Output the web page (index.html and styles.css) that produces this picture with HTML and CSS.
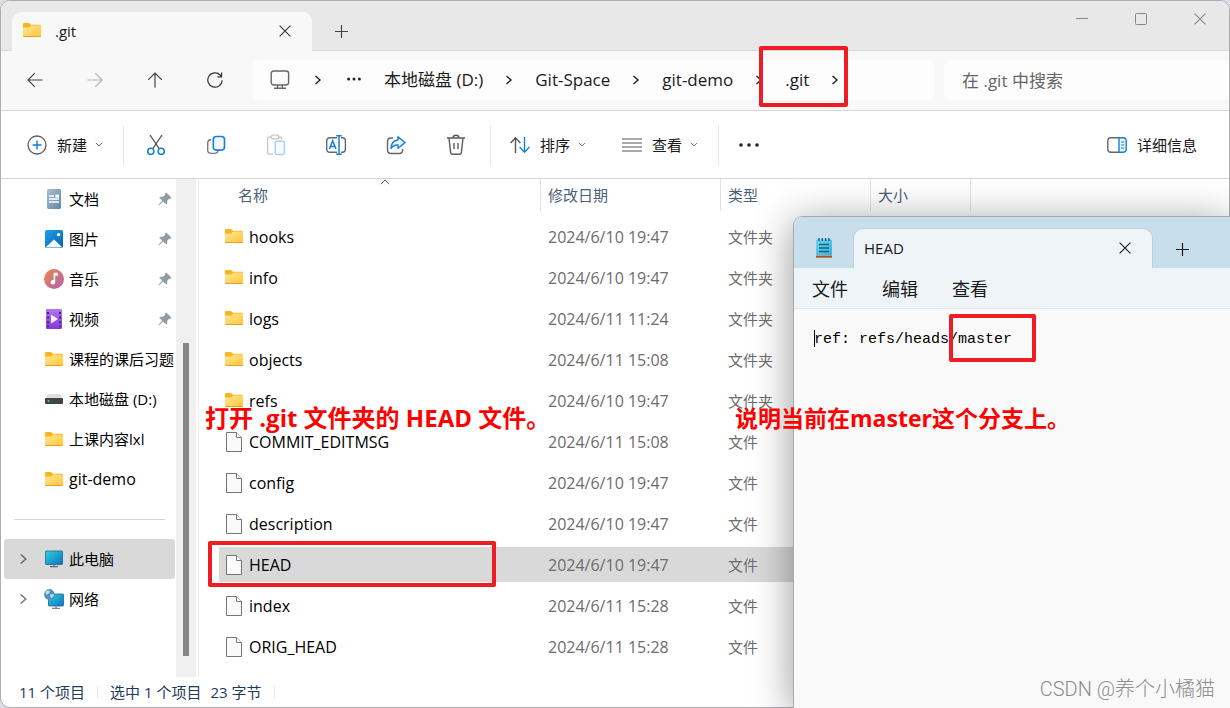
FILE: index.html
```html
<!DOCTYPE html>
<html lang="zh-CN">
<head>
<meta charset="utf-8">
<title>.git</title>
<link rel="stylesheet" href="styles.css">
</head>
<body>
<svg class="defs" width="0" height="0" aria-hidden="true">
  <defs>
    <linearGradient id="gFolder" x1="0" y1="0" x2="1" y2="1"><stop offset="0" stop-color="#ffe79a"/><stop offset="1" stop-color="#ffc83a"/></linearGradient>
    <linearGradient id="gDoc" x1="0" y1="0" x2="1" y2="1"><stop offset="0" stop-color="#a9bfd6"/><stop offset="1" stop-color="#6484a6"/></linearGradient>
    <linearGradient id="gPic" x1="0" y1="0" x2="1" y2="1"><stop offset="0" stop-color="#1fa0e6"/><stop offset="1" stop-color="#0763b4"/></linearGradient>
    <linearGradient id="gMusic" x1="0" y1="0" x2="1" y2="1"><stop offset="0" stop-color="#f0884f"/><stop offset="1" stop-color="#b05fae"/></linearGradient>
    <linearGradient id="gVideo" x1="0" y1="0" x2="0" y2="1"><stop offset="0" stop-color="#b573f2"/><stop offset="1" stop-color="#8238dc"/></linearGradient>
    <linearGradient id="gScreen" x1="0" y1="0" x2="1" y2="1"><stop offset="0" stop-color="#2fd3dc"/><stop offset="1" stop-color="#0b72c4"/></linearGradient>
    <linearGradient id="gNote" x1="0" y1="0" x2="1" y2="1"><stop offset="0" stop-color="#6fd3f3"/><stop offset="1" stop-color="#3fb0d6"/></linearGradient>
    <symbol id="folder" viewBox="0 0 18 15"><path d="M0 1.2Q0 0 1 0H6L8 1.8H17Q18 1.8 18 3V7H0Z" fill="#f9b51c"/><path d="M0 4.6H6.4L8.2 2.4H18V13H0Z" fill="url(#gFolder)"/><path d="M0 13H18V13.3Q18 14 17.2 14H.8Q0 14 0 13.3Z" fill="#e59f1c"/></symbol>
    <symbol id="file" viewBox="0 0 18 20"><path d="M1.5.5H11.5L16.5 5.5V19.5H1.5Z" fill="#fafafa" stroke="#757575"/><path d="M11.5.5V5.5H16.5" fill="#fff" stroke="#757575"/></symbol>
    <symbol id="pin" viewBox="0 0 14 14"><path d="M8.2.5 13.5 5.6 12.4 6.7 11.5 6.5 9.2 8.8 9.3 11.6 8.2 12.5 5.1 9.6 1.2 13.3.4 13.4.6 12.6 4.2 8.7 1.2 5.6 2.2 4.7 5.1 4.8 7.4 2.5 7.1 1.6Z" fill="#929da5"/></symbol>
    <symbol id="chev" viewBox="0 0 8 10"><path d="M1.5 1 6 5 1.5 9" fill="none" stroke="#222" stroke-width="1.4"/></symbol>
    <symbol id="down" viewBox="0 0 8 5"><path d="M.8.8 4 4 7.2.8" fill="none" stroke="#777"/></symbol>
    <symbol id="cross" viewBox="0 0 12 12"><path d="M.6.6 11.4 11.4M11.4.6.6 11.4" fill="none" stroke="currentColor" stroke-width="1.1"/></symbol>
    <symbol id="plus" viewBox="0 0 13 13"><path d="M6.5 0V13M0 6.5H13" fill="none" stroke="currentColor" stroke-width="1.2"/></symbol>
  </defs>
</svg>

<main class="explorer">
  <header class="titlebar">
    <div class="tab">
      <svg class="ic-folder"><use href="#folder"/></svg>
      <span class="tab-title">.git</span>
      <button class="plain" aria-label="关闭标签页"><svg class="ic-12"><use href="#cross"/></svg></button>
    </div>
    <button class="plain new-tab" aria-label="新标签页"><svg class="ic-13"><use href="#plus"/></svg></button>
    <div class="caption">
      <button class="plain" aria-label="最小化"><svg width="12" height="12"><path d="M0 5.500H12" stroke="#888"/></svg></button>
      <button class="plain" aria-label="最大化"><svg width="12" height="12"><rect x=".5" y=".5" width="11" height="11" rx="1" fill="none" stroke="#888"/></svg></button>
      <button class="plain" aria-label="关闭"><svg class="ic-12"><use href="#cross"/></svg></button>
    </div>
  </header>

  <nav class="navbar">
    <div class="nav-buttons">
      <button class="plain" aria-label="后退"><svg width="16" height="16" fill="none" stroke="#444" stroke-width="1.2"><path d="M15.5 8H1M7.8 1.2 1 8 7.8 14.8"/></svg></button>
      <button class="plain" aria-label="前进"><svg width="16" height="16" fill="none" stroke="#b5b5b5" stroke-width="1.2"><path d="M.5 8H15M8.2 1.2 15 8 8.2 14.8"/></svg></button>
      <button class="plain" aria-label="向上"><svg width="16" height="16" fill="none" stroke="#444" stroke-width="1.2"><path d="M8 15.5V1M1.2 7.8 8 1 14.8 7.8"/></svg></button>
      <button class="plain" aria-label="刷新"><svg width="16" height="16" fill="none" stroke="#333" stroke-width="1.2"><path d="M15.2 8.4A7.2 7.2 0 1 1 13.2 3L14.600 4.600M14.600.6V4.800H10.400"/></svg></button>
    </div>
    <div class="address">
      <svg class="pc" width="20" height="20" fill="none" stroke="#666" stroke-width="1.4"><rect x="1.2" y="1" width="17.4" height="14" rx="2.4"/><path d="M7.5 15V18M12.3 15V18M4 18.2H16"/></svg>
      <svg class="ic-chev lead"><use href="#chev"/></svg>
      <svg width="16" height="10" fill="#222"><circle cx="2.6" cy="4" r="1.5"/><circle cx="8" cy="4" r="1.5"/><circle cx="13.4" cy="4" r="1.5"/></svg>
      <a href="#">本地磁盘 (D:)</a>
      <svg class="ic-chev"><use href="#chev"/></svg>
      <a href="#">Git-Space</a>
      <svg class="ic-chev"><use href="#chev"/></svg>
      <a href="#">git-demo</a>
      <svg class="ic-chev"><use href="#chev"/></svg>
      <a href="#">.git</a>
      <svg class="ic-chev"><use href="#chev"/></svg>
    </div>
    <input class="search" type="search" placeholder="在 .git 中搜索" aria-label="在 .git 中搜索">
  </nav>

  <div class="toolbar">
    <button class="tool labelled first"><svg width="20" height="20" fill="none"><circle cx="10" cy="10" r="9" stroke="#5c5c5c" stroke-width="1.3"/><path d="M10 5.6V14.4M5.6 10H14.4" stroke="#0f7bd4" stroke-width="1.4"/></svg><span>新建</span><svg class="ic-down"><use href="#down"/></svg></button>
    <i class="sep"></i>
    <div class="tool-icons">
      <button class="tool" aria-label="剪切"><svg width="20" height="22" fill="none" stroke-width="1.3"><path d="M4 1 13.2 14.6M16 1 6.8 14.6" stroke="#555"/><circle cx="4.8" cy="17.3" r="3.1" stroke="#1480d8" stroke-width="1.5"/><circle cx="15.2" cy="17.3" r="3.1" stroke="#1480d8" stroke-width="1.5"/></svg></button>
      <button class="tool" aria-label="复制"><svg width="20" height="20" fill="none" stroke-width="1.4"><path d="M5.3 4.8Q1.7 4.8 1.7 8.2V15Q1.7 18.4 5.1 18.4H8.5Q11.5 18.4 12 16.2" stroke="#777"/><rect x="7.3" y="1.5" width="11.2" height="13.6" rx="3" stroke="#1480d8" stroke-width="1.6" fill="#f1f7fd"/></svg></button>
      <button class="tool" aria-label="粘贴"><svg width="20" height="22" fill="none" stroke-width="1.3"><path d="M6 3.2H3Q1.6 3.2 1.6 4.6V18.8Q1.6 20.2 3 20.2H7M12 3.2H14.5Q15.8 3.2 15.8 4.6V5.5" stroke="#c6c6c6"/><rect x="5" y="1.2" width="8" height="3.6" rx="1.8" stroke="#c6c6c6"/><rect x="9.2" y="7.3" width="9.2" height="13.2" rx="1.4" stroke="#a5d1f3" stroke-width="1.5" fill="#f5faff"/></svg></button>
      <button class="tool" aria-label="重命名"><svg width="22" height="20" fill="none" stroke-width="1.4"><path d="M12 2.7H5Q1.7 2.7 1.7 6V14Q1.7 17.3 5 17.3H12M16 2.7H17.4Q20.4 2.7 20.4 6V14Q20.4 17.3 17.4 17.3H16" stroke="#666"/><path d="M4.4 14 7.7 5.8 11 14M5.6 11.4H9.9M14 1V19M11.2.8H16.8M11.2 19.2H16.8" stroke="#1480d8" stroke-width="1.5"/></svg></button>
      <button class="tool" aria-label="共享"><svg width="20" height="20" fill="none" stroke-width="1.4" stroke-linejoin="round"><path d="M7 3H5Q1.5 3 1.5 6.4V15Q1.5 18.5 5 18.5H13.2Q16.6 18.5 16.6 15V14" stroke="#666"/><path d="M12 1.7 19 7.6 12 13.2V10Q7.6 9.6 5 13.5 5.4 5.6 12 5Z" stroke="#1480d8" fill="#f1f7fd"/></svg></button>
      <button class="tool" aria-label="删除"><svg width="20" height="22" fill="none" stroke="#5c5c5c" stroke-width="1.4"><path d="M1 4H19M3 4 4.6 18.4Q4.8 20.3 6.6 20.3H13.4Q15.2 20.3 15.4 18.4L17 4M7 4Q7.2 1.3 10 1.3T13 4M8 9V15M12 9V15"/></svg></button>
    </div>
    <i class="sep near"></i>
    <button class="tool labelled"><svg width="20" height="18" fill="none" stroke-width="1.4"><path d="M5.5 17V2M.6 7 5.5 1.8 10.4 7" stroke="#555"/><path d="M14.5 1V16M9.6 11 14.5 16.2 19.4 11" stroke="#1480d8"/></svg><span>排序</span><svg class="ic-down"><use href="#down"/></svg></button>
    <button class="tool labelled view"><svg width="20" height="14" stroke="#555" stroke-width="1.2"><path d="M0 1H20M0 5H20M0 9H20M0 13H20"/></svg><span>查看</span><svg class="ic-down"><use href="#down"/></svg></button>
    <i class="sep"></i>
    <button class="tool more" aria-label="更多"><svg width="20" height="6" fill="#222"><circle cx="2" cy="3" r="1.8"/><circle cx="10" cy="3" r="1.8"/><circle cx="18" cy="3" r="1.8"/></svg></button>
    <button class="tool labelled details"><svg width="20" height="16" fill="none" stroke-width="1.4"><path d="M12 .8H4Q.8.8.8 4V12Q.8 15.2 4 15.2H12" stroke="#666"/><path d="M12 .8H16Q19.2.8 19.2 4V12Q19.2 15.2 16 15.2H12Z" stroke="#1480d8" fill="#eef7ff"/><path d="M14 5H17.4M14 8H17.4M14 11H17.4" stroke="#1480d8" stroke-width="1.2"/></svg><span>详细信息</span></button>
  </div>

  <div class="content">
    <aside class="sidebar">
      <ul class="tree">
        <li><svg class="node" viewBox="0 0 20 20"><rect x="3" y="0" width="14" height="20" rx="1.4" fill="url(#gDoc)"/><path d="M5 7H10M5 10H15M5 13H15" stroke="#fff" stroke-width="1.3"/><rect x="11.4" y="5.6" width="3.6" height="3" fill="#fff"/></svg><span>文档</span><svg class="ic-pin"><use href="#pin"/></svg></li>
        <li><svg class="node" viewBox="0 0 20 20"><rect x="1" y="1" width="18" height="18" rx="1.8" fill="url(#gPic)"/><path d="M2 18 10 10.6 18 18Q17.5 18.6 16.5 18.6H3.5Q2.500 18.6 2 18Z" fill="#f3f9ff"/><circle cx="14.600" cy="5.600" r="1.700" fill="#fff"/></svg><span>图片</span><svg class="ic-pin"><use href="#pin"/></svg></li>
        <li><svg class="node" viewBox="0 0 20 20"><circle cx="10" cy="10" r="10" fill="url(#gMusic)"/><path d="M9.600 3.800H13.800V6.700H11.200V13.300A2.300 2.300 0 1 1 9.600 11.100Z" fill="#fff"/></svg><span>音乐</span><svg class="ic-pin"><use href="#pin"/></svg></li>
        <li><svg class="node" viewBox="0 0 20 20"><rect x="2" y="0" width="16" height="20" rx="1.200" fill="url(#gVideo)"/><path d="M4 3V18M16 3V18" stroke="#47246f" stroke-width="2" stroke-dasharray="2 2.600"/><path d="M7 5.600 14 10 7 14.400Z" fill="#f7f1ff"/></svg><span>视频</span><svg class="ic-pin"><use href="#pin"/></svg></li>
        <li><svg class="node-folder"><use href="#folder"/></svg><span>课程的课后习题</span></li>
        <li><svg class="node" viewBox="0 0 20 20"><path d="M4 5H16L19 10H1Z" fill="#dcdfe1"/><rect x="1" y="9" width="18" height="6" rx="1" fill="#414548"/><circle cx="4.500" cy="12" r="1" fill="#35e05a"/></svg><span>本地磁盘 (D:)</span></li>
        <li><svg class="node-folder"><use href="#folder"/></svg><span>上课内容lxl</span></li>
        <li><svg class="node-folder"><use href="#folder"/></svg><span class="latin">git-demo</span></li>
      </ul>
      <hr class="rule">
      <ul class="tree">
        <li class="current"><svg class="expand"><use href="#chev"/></svg><svg class="node" viewBox="0 0 20 20"><rect x="1.500" y="2" width="17" height="13.500" rx=".6" fill="url(#gScreen)" stroke="#24668c" stroke-width=".8"/><path d="M10 15.500V17.500M6 17.700H14" stroke="#5d6b73" stroke-width="1.200"/></svg><span>此电脑</span></li>
        <li><svg class="expand"><use href="#chev"/></svg><svg class="node" viewBox="0 0 20 20"><rect x="4.500" y="5" width="15" height="12" rx=".6" fill="url(#gScreen)" stroke="#24668c" stroke-width=".8"/><path d="M12 17V19M8 19.300H16" stroke="#7b878d" stroke-width="1.200"/><circle cx="5.400" cy="5.400" r="5.300" fill="#4b91bd"/><path d="M1.500 3Q4 .8 6 2L5 4.500 2.500 6ZM6 6Q9 4 10 6.500L7 9.500Z" fill="#bfe0ee"/></svg><span>网络</span></li>
      </ul>
    </aside>
    <div class="scrollbar"><div class="thumb"></div></div>

    <section class="files">
      <table>
        <colgroup><col class="c-name"><col class="c-date"><col class="c-type"><col class="c-size"><col></colgroup>
        <thead><tr><th><span>名称</span><svg class="sort" width="10" height="6" fill="none" stroke="#666"><path d="M.8 5.200 5 1 9.200 5.200"/></svg></th><th>修改日期</th><th>类型</th><th>大小</th><th></th></tr></thead>
        <tbody>
          <tr><td><div class="name"><svg class="ic-folder"><use href="#folder"/></svg>hooks</div></td><td class="date">2024/6/10 19:47</td><td>文件夹</td><td></td><td></td></tr>
          <tr><td><div class="name"><svg class="ic-folder"><use href="#folder"/></svg>info</div></td><td class="date">2024/6/10 19:47</td><td>文件夹</td><td></td><td></td></tr>
          <tr><td><div class="name"><svg class="ic-folder"><use href="#folder"/></svg>logs</div></td><td class="date">2024/6/11 11:24</td><td>文件夹</td><td></td><td></td></tr>
          <tr><td><div class="name"><svg class="ic-folder"><use href="#folder"/></svg>objects</div></td><td class="date">2024/6/11 15:08</td><td>文件夹</td><td></td><td></td></tr>
          <tr><td><div class="name"><svg class="ic-folder"><use href="#folder"/></svg>refs</div></td><td class="date">2024/6/10 19:47</td><td>文件夹</td><td></td><td></td></tr>
          <tr><td><div class="name"><svg class="ic-file"><use href="#file"/></svg>COMMIT_EDITMSG</div></td><td class="date">2024/6/11 15:08</td><td>文件</td><td></td><td></td></tr>
          <tr><td><div class="name"><svg class="ic-file"><use href="#file"/></svg>config</div></td><td class="date">2024/6/10 19:47</td><td>文件</td><td></td><td></td></tr>
          <tr><td><div class="name"><svg class="ic-file"><use href="#file"/></svg>description</div></td><td class="date">2024/6/10 19:47</td><td>文件</td><td></td><td></td></tr>
          <tr class="selected"><td><div class="name"><svg class="ic-file"><use href="#file"/></svg>HEAD</div></td><td class="date">2024/6/10 19:47</td><td>文件</td><td></td><td></td></tr>
          <tr><td><div class="name"><svg class="ic-file"><use href="#file"/></svg>index</div></td><td class="date">2024/6/11 15:28</td><td>文件</td><td></td><td></td></tr>
          <tr><td><div class="name"><svg class="ic-file"><use href="#file"/></svg>ORIG_HEAD</div></td><td class="date">2024/6/11 15:28</td><td>文件</td><td></td><td></td></tr>
        </tbody>
      </table>
    </section>
  </div>

  <footer class="status"><span>11 个项目</span><i></i><span>选中 1 个项目</span><span class="bytes">23 字节</span><i></i></footer>
</main>

<section class="notepad">
  <header class="np-title">
    <svg class="np-icon" width="16" height="20" viewBox="0 0 16 20"><rect x="0" y="1.500" width="16" height="16" fill="url(#gNote)"/><path d="M3 0V3M6.300 0V3M9.600 0V3M12.900 0V3" stroke="#14607f" stroke-width="1.400"/><path d="M3 6.500H13M3 10H13M3 13.500H13" stroke="#0d6489" stroke-width="1.500"/><path d="M0 18.700H16" stroke="#a5571b" stroke-width="2"/></svg>
    <div class="np-tab"><span>HEAD</span><button class="plain" aria-label="关闭标签页"><svg class="ic-12"><use href="#cross"/></svg></button></div>
    <button class="plain np-new" aria-label="新标签页"><svg class="ic-13"><use href="#plus"/></svg></button>
  </header>
  <div class="np-menu"><button class="plain">文件</button><button class="plain">编辑</button><button class="plain">查看</button></div>
  <div class="np-body">
    <i class="caret"></i>
    <textarea aria-label="HEAD" spellcheck="false">ref: refs/heads/master</textarea>
  </div>
</section>

<div class="mark mark-path"></div>
<div class="mark mark-head"></div>
<div class="mark mark-branch"></div>
<p class="note note-open">打开 .git 文件夹的 HEAD 文件。</p>
<p class="note note-branch">说明当前在master这个分支上。</p>
<p class="watermark">CSDN @养个小橘猫</p>
</body>
</html>
```

FILE: styles.css
```css
* { box-sizing: border-box; }

body {
  margin: 0;
  height: 100vh;
  overflow: hidden;
  position: relative;
  background: #dcdce6;
  color: #1a1a1a;
  font: 15px/20px "Open Sans", "Noto Sans CJK SC", sans-serif;
}

svg { display: block; flex: none; }
.defs { position: absolute; }
button, input, textarea { font: inherit; color: inherit; }
.plain, .tool {
  border: 0;
  padding: 0;
  background: none;
  display: flex;
  align-items: center;
  justify-content: center;
}
a { color: inherit; text-decoration: none; }
ul { list-style: none; margin: 0; padding: 0; }

.ic-12 { width: 12px; height: 12px; }
.ic-13 { width: 13px; height: 13px; }
.ic-folder, .node-folder { width: 18px; height: 15px; }
.ic-file { width: 18px; height: 20px; }
.ic-chev { width: 8px; height: 10px; }
.ic-down { width: 8px; height: 5px; }
.ic-pin { width: 14px; height: 14px; }

/* Explorer window */
.explorer {
  height: 100%;
  display: flex;
  flex-direction: column;
  border: 1px solid #adadb0;
  border-radius: 10px;
  overflow: hidden;
  background: #fff;
}

.titlebar {
  flex: none;
  height: 50px;
  padding-left: 11px;
  display: flex;
  align-items: flex-end;
  background: #e8e8e8;
  box-shadow: inset 0 -1px #d6d6d6;
}
.tab {
  width: 300px;
  height: 39px;
  padding: 0 21px 2px 11px;
  display: flex;
  align-items: center;
  border-radius: 9px 9px 0 0;
  background: #f8f8f8;
  font-weight: 500;
}
.tab-title { flex: 1; margin-left: 14px; }
.tab .plain { color: #333; }
.new-tab { width: 58px; height: 39px; color: #444; }
.caption { margin-left: auto; align-self: flex-start; display: flex; color: #888; }
.caption .plain { width: 59px; height: 36px; }

.navbar {
  flex: none;
  height: 60px;
  padding-bottom: 1px;
  display: flex;
  align-items: center;
  gap: 10px;
  background: #f8f8f8;
  border-bottom: 1px solid #d6d6d6;
  font-size: 17px;
}
.nav-buttons { flex: none; display: flex; padding-left: 4px; width: 242px; }
.nav-buttons .plain { flex: none; width: 60px; height: 40px; }
.address {
  flex: 0 1 681px;
  height: 40px;
  padding-left: 17px;
  display: flex;
  align-items: center;
  gap: 22px;
  border-radius: 6px;
  background: #fdfdfd;
  white-space: nowrap;
}
.lead { margin: 0 2px; }
.search {
  flex: 1;
  min-width: 0;
  height: 40px;
  padding: 0 18px;
  border: 0;
  border-radius: 6px 0 0 6px;
  background: #fdfdfd;
}
.search::placeholder { color: #666; opacity: 1; }

.toolbar {
  flex: none;
  height: 68px;
  display: flex;
  align-items: center;
  border-bottom: 1px solid #d4d4d4;
  padding-right: 32px;
}
.tool { height: 40px; }
.labelled { gap: 10px; white-space: nowrap; }
.labelled .ic-down { margin-left: -2px; }
.first { margin-left: 26px; }
.sep { flex: none; width: 1px; height: 40px; margin: 0 20px; background: #e6e6e6; }
.tool-icons { display: flex; margin-left: -18px; }
.tool-icons .tool { width: 60px; }
.near { margin-left: 4px; margin-right: 19px; }
.view { margin-left: 36px; }
.details { margin-left: auto; }

.content { flex: 1; min-height: 0; display: flex; }

.sidebar { flex: none; width: 175px; padding-left: 3px; overflow: hidden; }
.tree li {
  height: 40px;
  padding: 0 4px 0 40px;
  display: flex;
  align-items: center;
  gap: 5px;
  position: relative;
  border-radius: 3px;
  white-space: nowrap;
  color: #000;
}
.node { width: 20px; height: 20px; }
.node-folder { margin: 0 1px; }
.ic-pin { margin-left: auto; }
.tree .current { background: #d9d9d9; margin-right: 1px; }
.expand { position: absolute; left: 15px; width: 9px; height: 12px; opacity: .6; }
.rule { height: 1px; margin: 20px 11px 19px 10px; border: 0; background: #d4d4d4; }

.scrollbar { flex: none; width: 20px; padding: 164px 7px 21px; background: #f0f0f0; }
.thumb { height: 100%; background: #868686; }

.files { flex: 1; min-width: 0; margin-left: 2px; border-left: 1px solid #f0f0f0; }
table { width: 100%; table-layout: fixed; border-collapse: separate; border-spacing: 0; }
.c-name { width: 341px; }
.c-date { width: 180px; }
.c-type { width: 150px; }
.c-size { width: 100px; }
th {
  height: 37px;
  padding: 0 0 5px 8px;
  text-align: left;
  font-weight: 400;
  color: #4c607a;
  background: linear-gradient(#e2e2e2, #e2e2e2) left top / 1px 32px no-repeat;
}
th:first-child { padding-left: 39px; background: none; position: relative; }
.sort { position: absolute; left: 181px; top: 0; }
td {
  height: 41px;
  padding: 0 0 0 8px;
  border: solid transparent;
  border-width: 3px 0;
  background-clip: padding-box;
  color: #6d6d6d;
}
td:first-child { padding-left: 6px; border-left-width: 20px; }
.name { display: flex; align-items: center; gap: 6px; color: #000; }
.name, .date, .latin { font-size: 16px; }
.selected td { background-color: #d9d9d9; }

.status {
  flex: none;
  height: 30px;
  padding-left: 18px;
  display: flex;
  align-items: center;
  color: #1e395b;
}
.status i { width: 1px; height: 14px; margin: 0 12px; background: #e8e8e8; }
.bytes { margin-left: 9px; }

/* Notepad window over the explorer */
.notepad {
  position: absolute;
  left: 793px;
  top: 216px;
  right: 0;
  bottom: 0;
  display: flex;
  flex-direction: column;
  border: solid #a8acae;
  border-width: 1px 0 0 1px;
  border-radius: 9px 0 0 0;
  overflow: hidden;
  background: #f9f9f9;
  box-shadow: 0 6px 40px rgba(0, 0, 0, .42);
}
.np-title {
  flex: none;
  height: 51px;
  padding-left: 22px;
  display: flex;
  align-items: flex-end;
  background: #c9deeb;
}
.np-icon { margin-bottom: 10px; }
.np-tab {
  width: 298px;
  height: 39px;
  margin-left: 22px;
  padding: 0 21px 2px 10px;
  display: flex;
  align-items: center;
  justify-content: space-between;
  border-radius: 9px 9px 0 0;
  background: #eff4f9;
  box-shadow: 0 0 0 1px #bdd0dd;
  font-weight: 500;
}
.np-new { width: 60px; height: 38px; }
.np-menu {
  flex: none;
  position: relative;
  height: 41px;
  padding: 2px 0 0 18px;
  display: flex;
  gap: 34px;
  background: #eff4f9;
  border-bottom: 1px solid #dfe5ea;
  font-size: 18px;
}
.np-body { flex: 1; position: relative; }
.np-body textarea {
  display: block;
  width: 100%;
  height: 100%;
  padding: 21px 20px;
  border: 0;
  outline: 0;
  resize: none;
  background: none;
  font: 15px/20px "Liberation Mono", monospace;
  color: #000;
}
.caret { position: absolute; left: 20px; top: 21px; width: 1px; height: 17px; background: #000; }

/* Red annotations */
.mark { position: absolute; border: 4px solid #ee1c25; border-radius: 2px; }
.mark-path { left: 759px; top: 46px; width: 89px; height: 61px; }
.mark-head { left: 208px; top: 541px; width: 288px; height: 46px; }
.mark-branch { left: 949px; top: 314px; width: 87px; height: 48px; }
.note {
  position: absolute;
  margin: 0;
  line-height: 30px;
  font-weight: 700;
  color: #f00;
  white-space: nowrap;
}
.note-open { left: 205px; top: 403px; font-size: 24px; }
.note-branch { left: 735px; top: 403px; font-size: 23px; }
.watermark {
  position: absolute;
  right: 15px;
  bottom: 7px;
  margin: 0;
  font: 300 20px/24px Roboto, "Noto Sans CJK SC", sans-serif;
  color: #8c8c8c;
}
```
